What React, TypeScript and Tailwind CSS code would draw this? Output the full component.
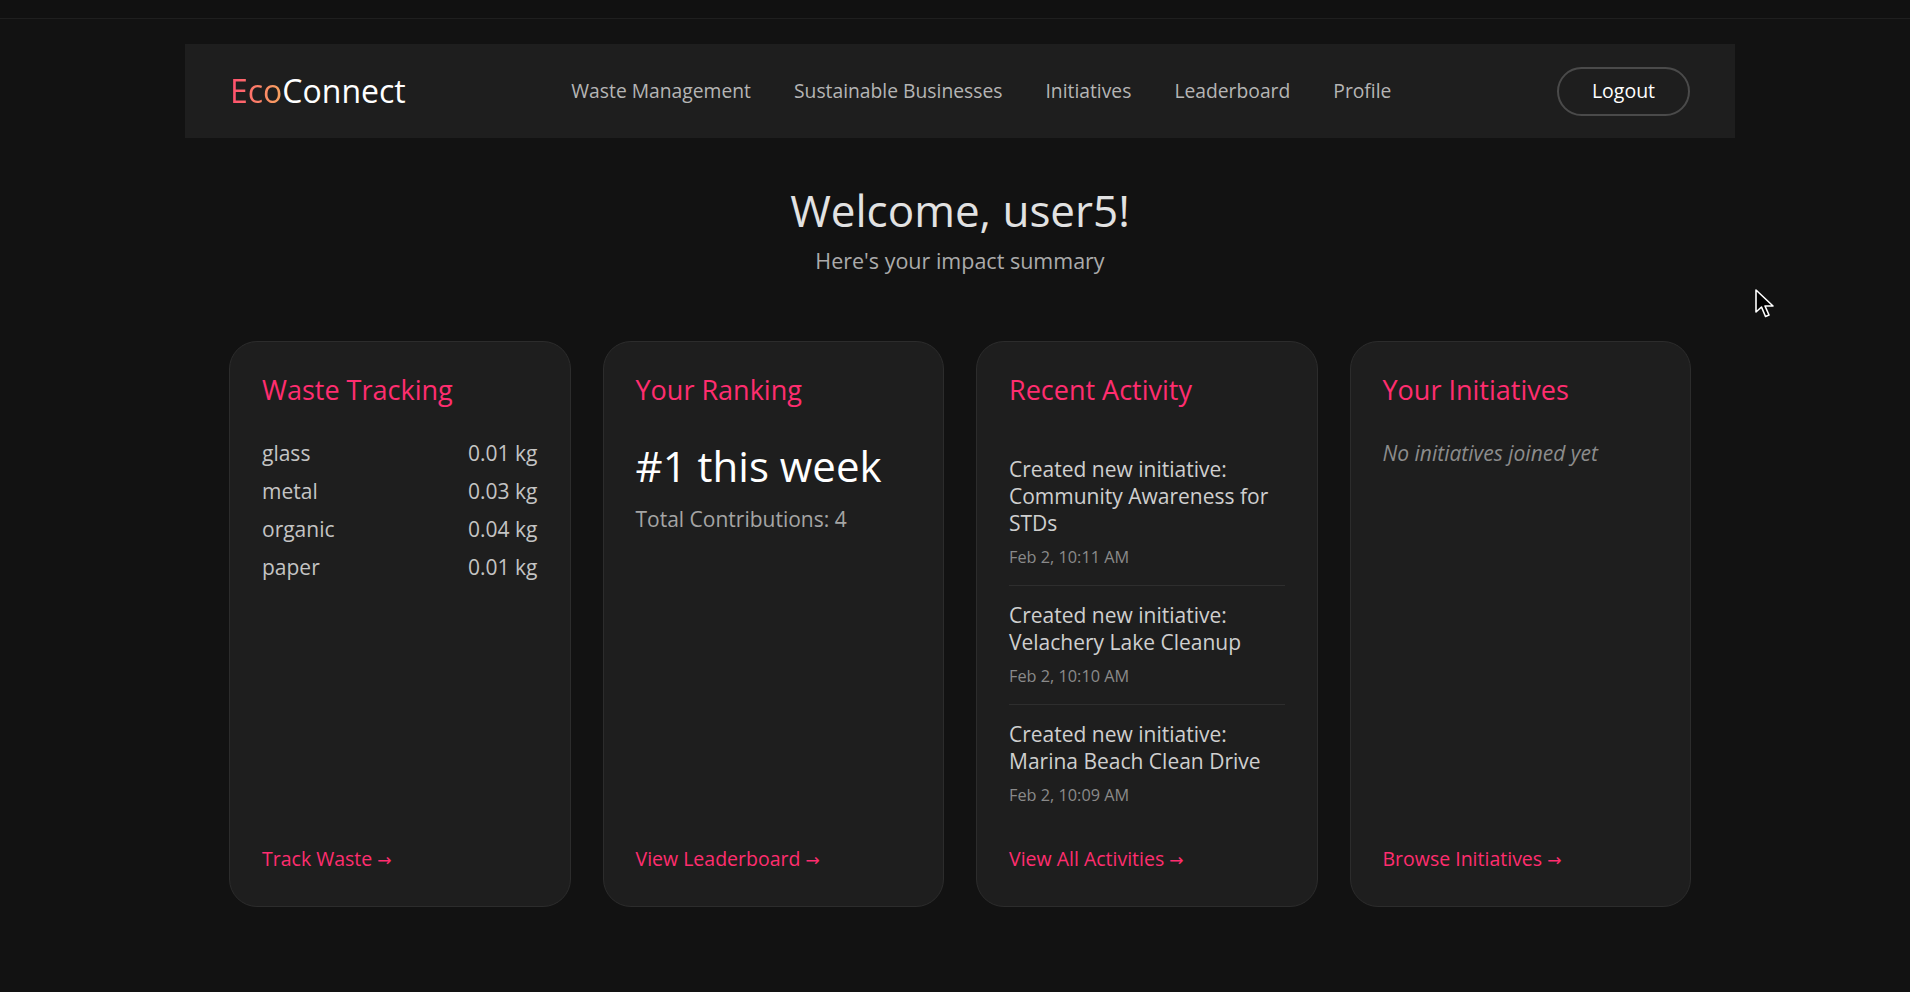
import { ReactNode } from "react";

const font = { fontFamily: '"Open Sans", "Noto Sans", sans-serif' };

const navLinks = ["Waste Management", "Sustainable Businesses", "Initiatives", "Leaderboard", "Profile"];

const waste = [
    { type: "glass", amount: "0.01 kg" },
    { type: "metal", amount: "0.03 kg" },
    { type: "organic", amount: "0.04 kg" },
    { type: "paper", amount: "0.01 kg" },
];

const activities = [
    { text: "Created new initiative: Community Awareness for STDs", date: "Feb 2, 10:11 AM" },
    { text: "Created new initiative: Velachery Lake Cleanup", date: "Feb 2, 10:10 AM" },
    { text: "Created new initiative: Marina Beach Clean Drive", date: "Feb 2, 10:09 AM" },
];

const Card = ({ title, link, children }: { title: string; link: string; children: ReactNode }) => (
    <div className="flex h-[566px] flex-col rounded-[28px] border border-[#2c2c2c] bg-[#1e1e1e] p-8">
        <h3 className="mb-8 text-[27px] leading-8 font-medium text-[#ff2d6f]">{title}</h3>
        <div className="flex-1">{children}</div>
        <a className="text-[19.5px] leading-7 text-[#ff2d6f]" href="#">
            {link}{" "}
            <span style={{ fontFamily: '"DejaVu Sans", sans-serif' }} className="text-[17px]">
                →
            </span>
        </a>
    </div>
);

const Cursor = () => (
    <svg className="absolute left-[1754px] top-[288px]" width="22" height="32" viewBox="0 0 22 32">
        <path
            d="M2 2 L2 24 L7.5 19 L11.5 28.5 L15 27 L11 18 L19 18 Z"
            fill="#000"
            stroke="#fff"
            strokeWidth="1.6"
            strokeLinejoin="round"
        />
    </svg>
);

const App = () => {
    return (
        <div className="relative min-h-[992px] bg-[#121212]" style={font}>
            <div className="h-[19px] border-b border-[#1f1f1f] bg-[#111]" />
            <div className="ml-[185px] w-[1550px] pt-[25px]">
                <nav className="flex h-[94px] items-center justify-between bg-[#1e1e1e] px-[45px]">
                    <div className="text-[32px] leading-none">
                        <span className="bg-gradient-to-r from-[#ff4a6e] to-[#f7a35f] bg-clip-text text-transparent">
                            Eco
                        </span>
                        <span className="text-white">Connect</span>
                    </div>
                    <div className="flex items-center gap-[43px]">
                        {navLinks.map((l) => (
                            <a key={l} href="#" className="text-[19.3px] text-[#b5b5b5]">
                                {l}
                            </a>
                        ))}
                    </div>
                    <button className="h-[49px] w-[133px] rounded-full border-2 border-[#4a4a4a] text-[19.5px] text-white">
                        Logout
                    </button>
                </nav>

                <div className="mt-[46px] text-center">
                    <h1 className="text-[44px] leading-[52px] font-medium text-[#e2e2e2]">Welcome, user5!</h1>
                    <p className="mt-[11px] text-[21.5px] leading-7 text-[#ababab]">Here's your impact summary</p>
                </div>

                <div className="mt-[66px] grid grid-cols-4 gap-8 px-[44px]">
                    <Card title="Waste Tracking" link="Track Waste">
                        <div className="flex flex-col gap-2">
                            {waste.map((w) => (
                                <div key={w.type} className="flex justify-between text-[21px] leading-[30px] text-[#c4c4c4]">
                                    <span>{w.type}</span>
                                    <span>{w.amount}</span>
                                </div>
                            ))}
                        </div>
                    </Card>

                    <Card title="Your Ranking" link="View Leaderboard">
                        <div className="mt-[2px] text-[42px] leading-[52px] text-white">#1 this week</div>
                        <div className="mt-[13px] text-[21px] leading-7 text-[#a5a5a5]">Total Contributions: 4</div>
                    </Card>

                    <Card title="Recent Activity" link="View All Activities">
                        <div className="pt-[2px]">
                            {activities.map((a, i) => (
                                <div
                                    key={i}
                                    className={`py-4 ${i < activities.length - 1 ? "border-b border-[#2e2e2e]" : ""}`}
                                >
                                    <div className="text-[21px] leading-[27px] text-[#cfcfcf]">{a.text}</div>
                                    <div className="mt-2 text-[16.3px] leading-6 text-[#8a8a8a]">{a.date}</div>
                                </div>
                            ))}
                        </div>
                    </Card>

                    <Card title="Your Initiatives" link="Browse Initiatives">
                        <div className="text-[21px] leading-[30px] text-[#8c8c8c] italic">No initiatives joined yet</div>
                    </Card>
                </div>
            </div>
            <Cursor />
        </div>
    );
};

export default App;
